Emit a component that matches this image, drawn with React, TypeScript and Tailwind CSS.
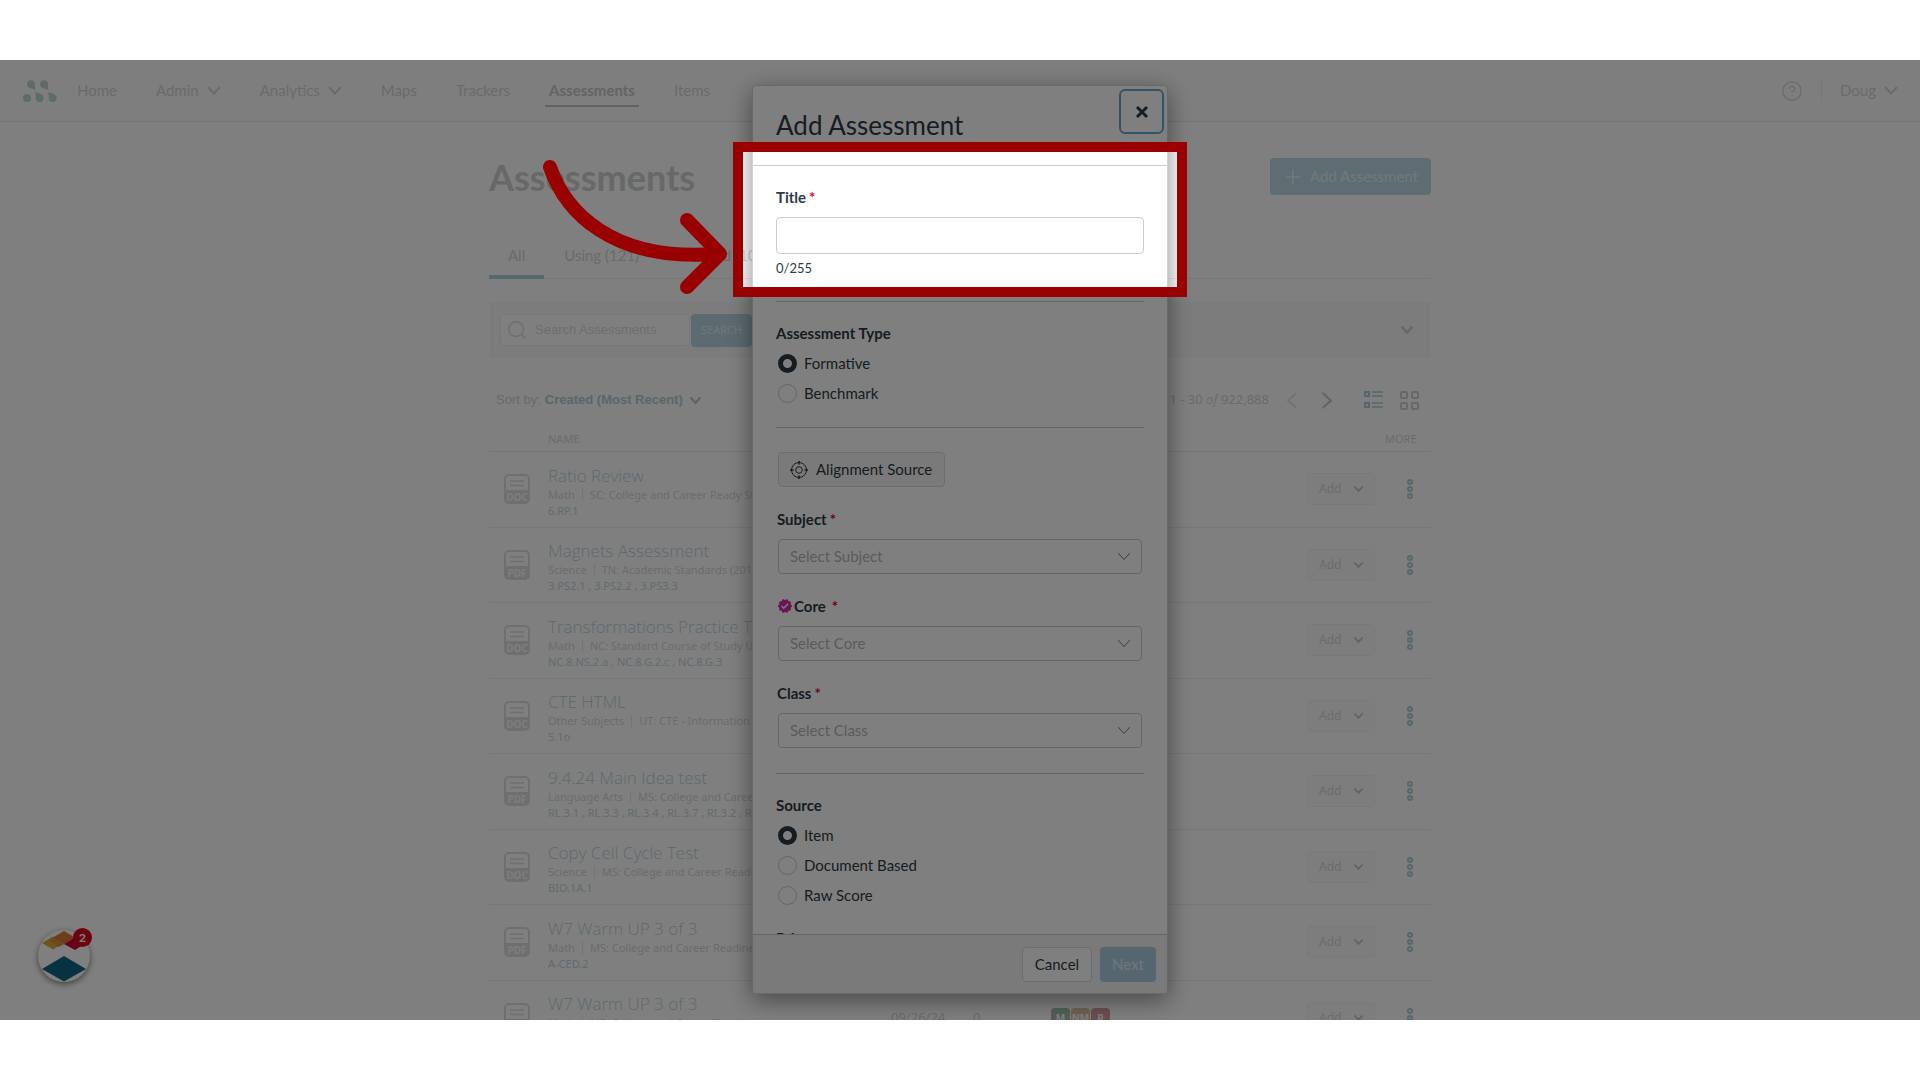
import type { ReactNode } from "react";
import { CircleQuestionMark, Plus, Search } from "lucide-react";
import { MdVerified } from "react-icons/md";
import { clsx } from "clsx";

type Assessment = {
  title: string;
  kind: "DOC" | "PDF";
  subject: string;
  framework: string;
  standards: string;
  created?: string;
  count?: number;
};

const assessments: Assessment[] = [
  { title: "Ratio Review", kind: "DOC", subject: "Math", framework: "SC: College and Career Ready Standards", standards: "6.RP.1" },
  { title: "Magnets Assessment", kind: "PDF", subject: "Science", framework: "TN: Academic Standards (2018)", standards: "3.PS2.1 , 3.PS2.2 , 3.PS3.3" },
  { title: "Transformations Practice Test", kind: "DOC", subject: "Math", framework: "NC: Standard Course of Study Updated", standards: "NC.8.NS.2.a , NC.8.G.2.c , NC.8.G.3" },
  { title: "CTE HTML", kind: "DOC", subject: "Other Subjects", framework: "UT: CTE - Information Technology", standards: "5.1o" },
  { title: "9.4.24 Main Idea test", kind: "PDF", subject: "Language Arts", framework: "MS: College and Career Readiness", standards: "RL.3.1 , RL.3.3 , RL.3.4 , RL.3.7 , RI.3.2 , RI.3.3" },
  { title: "Copy Cell Cycle Test", kind: "DOC", subject: "Science", framework: "MS: College and Career Readiness", standards: "BIO.1A.1" },
  { title: "W7 Warm UP 3 of 3", kind: "PDF", subject: "Math", framework: "MS: College and Career Readiness", standards: "A-CED.2" },
  { title: "W7 Warm UP 3 of 3", kind: "PDF", subject: "Math", framework: "MS: College and Career Readiness", standards: "A-CED.2", created: "09/26/24", count: 0 },
];

const navItems = [
  { label: "Home" },
  { label: "Admin", menu: true },
  { label: "Analytics", menu: true },
  { label: "Maps" },
  { label: "Trackers" },
  { label: "Assessments", active: true },
  { label: "Items" },
];

function Chevron({ className }: { className?: string }) {
  return (
    <svg
      viewBox="0 0 14 9"
      className={clsx("shrink-0 fill-none stroke-current", className)}
      strokeLinecap="round"
      strokeLinejoin="round"
    >
      <path d="M1.500 1.500L7 7.500l5.500-6" />
    </svg>
  );
}

function Logo() {
  return (
    <svg viewBox="0 0 34 22" className="h-[22px] w-[34px] fill-[#badacb]">
      <path d="M8 .3a4 4 0 0 1 4 3.600c.2 2 0 4 .4 6.100C10 8.700 4 8.500 4 4.300A4 4 0 0 1 8 .3z" />
      <path d="M21 .3a4 4 0 0 1 4 3.600c.2 2 0 4 .4 6.100-2.400-1.300-8.400-1.500-8.400-5.700A4 4 0 0 1 21 .3z" />
      <circle cx="4" cy="18" r="4" />
      <path d="M16.700 22a4 4 0 0 1-4-3.700c-.2-2 0-4-.4-6.300 2.400 1.300 8.400 1.700 8.400 6a4 4 0 0 1-4 4z" />
      <path d="M29.700 22a4 4 0 0 1-4-3.700c-.2-2 0-4-.4-6.300 2.400 1.300 8.400 1.700 8.400 6a4 4 0 0 1-4 4z" />
    </svg>
  );
}

function TopNav() {
  return (
    <header className="flex h-[62px] items-center border-b border-[#ececec] bg-[#fdfdfd] pr-[22px] pl-[23px] text-[15px] text-[#d3d6d7]">
      <Logo />
      <nav className="ml-5 flex items-center gap-[39px]">
        {navItems.map((item) => (
          <a
            key={item.label}
            href="#"
            className={
              item.active
                ? "relative -mx-1 px-1 font-bold text-[#c4c8ca] after:absolute after:inset-x-0 after:-bottom-[5px] after:h-[2px] after:bg-[#c0c3c4]"
                : "flex items-center gap-2"
            }
          >
            {item.label}
            {item.menu && <Chevron className="h-[9px] w-[14px] stroke-2" />}
          </a>
        ))}
      </nav>
      <div className="ml-auto flex items-center">
        <button aria-label="Help">
          <CircleQuestionMark className="size-[22px]" strokeWidth={1.5} />
        </button>
        <span className="mx-[18px] h-[22px] w-px bg-[#efefef]" />
        <button className="flex items-center gap-2">
          Doug
          <Chevron className="h-[9px] w-[14px] stroke-2" />
        </button>
      </div>
    </header>
  );
}

function FileIcon({ kind }: { kind: string }) {
  return (
    <svg viewBox="0 0 26 30" className="ml-[15px] h-[30px] w-[26px]">
      <rect x="1" y="1" width="24" height="28" rx="4" fill="none" stroke="#dedfe1" strokeWidth="2" />
      <path d="M6 7h14M6 11.500h14" stroke="#dedfe1" strokeWidth="1.500" />
      <path d="M1 16h24v9a4 4 0 0 1-4 4H5a4 4 0 0 1-4-4z" fill="#dedfe1" />
      <text
        x="13"
        y="27"
        textAnchor="middle"
        fontSize="10"
        fontWeight="700"
        fill="#fbfbfb"
        className="font-['Liberation_Sans_Narrow','Open_Sans',sans-serif]"
      >
        {kind}
      </text>
    </svg>
  );
}

function AssessmentTable() {
  return (
    <table className="w-full table-fixed text-left font-['Noto_Sans',sans-serif] text-[11px] text-[#d6d8d9]">
      <colgroup>
        <col className="w-[59px]" />
        <col />
        <col className="w-[82px]" />
        <col className="w-[78px]" />
        <col className="w-[256px]" />
        <col className="w-[78px]" />
        <col className="w-[46px]" />
      </colgroup>
      <thead>
        <tr className="h-[26px] border-b border-[#ebebeb] align-middle">
          <td />
          <th className="pt-[2px] font-normal">NAME</th>
          <td colSpan={4} />
          <th className="pt-[2px] font-normal">MORE</th>
        </tr>
      </thead>
      <tbody>
        {assessments.map((row, i) => (
          <tr key={i} className="h-[75px] border-b border-[#efefef] odd:h-[76px]">
            <td>
              <FileIcon kind={row.kind} />
            </td>
            <td className="overflow-hidden pt-1 whitespace-nowrap">
              <a href="#" className="block font-['Open_Sans',sans-serif] text-[17px] leading-[23px] font-light text-[#b9d3e0]">
                {row.title}
              </a>
              <div className="flex h-4 items-center leading-4">
                {row.subject}
                <span className="mx-[7px] h-3 w-px bg-[#e8e8e8]" />
                {row.framework}
              </div>
              <div className="leading-4 text-[#c2d7e1]">{row.standards}</div>
            </td>
            <td className="text-[13px]">{row.created}</td>
            <td className="text-[13px]">{row.count}</td>
            <td>
              {row.created && (
                <div className="flex gap-px text-center text-[10px] leading-5 font-bold text-white">
                  <span className="w-[19px] rounded-sm bg-[#a3c4ae]">M</span>
                  <span className="w-[19px] rounded-sm bg-[#dcc5a2]">NM</span>
                  <span className="w-[19px] rounded-sm bg-[#dc9ca5]">R</span>
                </div>
              )}
            </td>
            <td>
              <button className="flex h-8 w-[68px] items-center justify-between rounded-sm border border-[#f3f3f3] bg-[#fafafa] px-[11px] text-xs">
                Add
                <Chevron className="h-[6px] w-[9px] stroke-3 text-[#c6c9ca]" />
              </button>
            </td>
            <td>
              <button aria-label="More" className="ml-[22px] flex flex-col items-center gap-px">
                <span className="size-[6px] rounded-full border-2 border-[#b0cddb]" />
                <span className="size-[6px] rounded-full border-2 border-[#b0cddb]" />
                <span className="size-[6px] rounded-full border-2 border-[#b0cddb]" />
              </button>
            </td>
          </tr>
        ))}
      </tbody>
    </table>
  );
}

function AssessmentsPage() {
  return (
    <main className="mx-auto max-w-[942px] pt-9">
      <div className="flex h-[37px] items-center justify-between">
        <h1 className="text-4xl font-bold text-[#cdd0d2]">Assessments</h1>
        <button className="flex h-full items-center gap-[5px] rounded-sm bg-[#bddae6] pr-[13px] pl-[11px] text-[15px] text-[#e7f0f4]">
          <Plus className="size-6" strokeWidth={1.5} />
          Add Assessment
        </button>
      </div>

      <div className="mt-[39px] flex h-[45px] border-b border-[#efefef] text-[15px] text-[#d3d6d7]">
        <button className="h-[45px] border-b-4 border-[#afd0de] px-[19px] pt-[2px]">All</button>
        <button className="px-5 pb-[2px]">Using (121)</button>
        <button className="px-5 pb-[2px]">Created (10)</button>
      </div>

      <div className="mt-[23px] flex h-14 items-center bg-[#f9f9f9] pr-[18px] pl-[11px]">
        <label className="flex h-8 w-[190px] items-center gap-[7px] rounded-sm border border-[#f0f0f0] bg-white px-[5px]">
          <Search className="size-[22px] shrink-0 text-[#dadada]" strokeWidth={1.5} />
          <input
            aria-label="Search Assessments"
            placeholder="Search Assessments"
            className="w-full font-['Liberation_Sans',sans-serif] text-[13px] outline-none placeholder:text-[#dcdddd]"
          />
        </label>
        <button className="ml-px h-[33px] rounded-sm bg-[#b9d5e2] px-[10px] font-['Open_Sans',sans-serif] text-[11px] text-[#e4eef3]">
          SEARCH
        </button>
        <button aria-label="Expand filters" className="ml-auto text-[#cfd1d2]">
          <Chevron className="h-2 w-3 stroke-3" />
        </button>
      </div>

      <div className="mt-[22px] mb-[5px] flex h-10 items-center pr-3 pl-[7px] font-['Liberation_Sans',sans-serif] text-[13px] text-[#d3d4d5]">
        <span>Sort by:</span>
        <button className="ml-1 flex items-center gap-[7px] font-bold text-[#b7ccd7]">
          Created (Most Recent)
          <Chevron className="h-[7px] w-[11px] stroke-3" />
        </button>
        <span className="ml-auto font-['Noto_Sans',sans-serif]">
          1 - 30 <i className="text-[#dcdddd]">of</i> 922,888
        </span>
        <button aria-label="Previous page" className="ml-4 text-[#e4e4e4]">
          <Chevron className="h-[9px] w-[14px] rotate-90 scale-130 stroke-[1.500px]" />
        </button>
        <button aria-label="Next page" className="ml-[21px] text-[#c0c3c5]">
          <Chevron className="h-[9px] w-[14px] -rotate-90 scale-130 stroke-[1.500px]" />
        </button>
        <button aria-label="List view" className="ml-[30px]">
          <svg viewBox="0 0 19 18" className="h-[18px] w-[19px] fill-none stroke-[#aecbda] stroke-2">
            <rect x="1" y="1" width="4" height="4" />
            <rect x="1" y="12" width="4" height="4" />
            <path d="M8 1h11M8 5h11M8 12h11M8 16h11" strokeWidth="1.500" />
          </svg>
        </button>
        <button aria-label="Grid view" className="ml-[17px]">
          <svg viewBox="0 0 19 19" className="size-[19px] fill-none stroke-[#cfd1d2] stroke-2">
            <rect x="1" y="1" width="6" height="6" rx="1" />
            <rect x="12" y="1" width="6" height="6" rx="1" />
            <rect x="1" y="12" width="6" height="6" rx="1" />
            <rect x="12" y="12" width="6" height="6" rx="1" />
          </svg>
        </button>
      </div>

      <AssessmentTable />
    </main>
  );
}

function Required() {
  return <span className="text-[#e0061f]">*</span>;
}

function RadioGroup({ name, legend, options }: { name: string; legend: string; options: string[] }) {
  return (
    <fieldset className="border-t border-[#c7cdd1] pt-4">
      <legend className="float-left w-full leading-[30px] font-bold">{legend}</legend>
      {options.map((option, i) => (
        <label key={option} className="clear-both ml-[2px] flex h-[30px] items-center gap-[7px]">
          <input
            type="radio"
            name={name}
            defaultChecked={i === 0}
            className="size-[19px] appearance-none rounded-full border border-[#c7cdd1] checked:border-[5px] checked:border-[#2d3b45]"
          />
          {option}
        </label>
      ))}
    </fieldset>
  );
}

function SelectField({ id, label, icon }: { id: string; label: string; icon?: ReactNode }) {
  return (
    <div className="mt-5">
      <label
        htmlFor={id}
        className={clsx("ml-px flex h-6 items-center font-bold", icon ? "gap-[6px]" : "gap-[3px]")}
      >
        <span className="flex items-center gap-px">
          {icon}
          {label}
        </span>
        <Required />
      </label>
      <div className="relative mx-[2px] mt-2">
        <select
          id={id}
          className="h-[35px] w-full appearance-none rounded-sm border border-[#c7cdd1] bg-white px-[11px] text-[#b3b7ba]"
        >
          <option>Select {label}</option>
        </select>
        <Chevron className="pointer-events-none absolute top-[13px] right-[11px] h-[9px] w-[14px] text-[#6b7780]" />
      </div>
    </div>
  );
}

function AddAssessmentDialog() {
  return (
    <div className="absolute inset-0 flex justify-center pt-[25px] pb-[26px]">
      <div
        role="dialog"
        aria-labelledby="dialog-title"
        className="flex w-[416px] flex-col overflow-hidden rounded-sm border border-[#d0d3d5] bg-white text-[15px] text-[#2d3b45] shadow-[0_6px_24px_rgba(0,0,0,0.45)]"
      >
        <div className="flex h-20 shrink-0 items-start justify-between border-b border-[#c7cdd1] pt-[3px] pr-[3px] pl-[23px]">
          <h2 id="dialog-title" className="mt-[18px] text-[26px] leading-9">
            Add Assessment
          </h2>
          <button
            aria-label="Close"
            className="flex size-[45px] items-center justify-center rounded-md border-2 border-[#66a9c9]"
          >
            <svg viewBox="0 0 14 14" className="size-[14px] stroke-[#2d3b45] stroke-3">
              <path d="M2 2l10 10M12 2L2 12" />
            </svg>
          </button>
        </div>

        <form className="min-h-0 flex-1 overflow-hidden px-[23px] pt-[19px]">
          <label htmlFor="title" className="flex h-6 items-center gap-[3px] font-bold">
            Title <Required />
          </label>
          <input id="title" className="mt-2 block h-[37px] w-full rounded-sm border border-[#c7cdd1] px-3" />
          <p className="mt-1 mb-[23px] text-[13px] leading-5">0/255</p>

          <RadioGroup name="type" legend="Assessment Type" options={["Formative", "Benchmark"]} />

          <div className="mt-[19px] border-t border-[#c7cdd1] pt-6 pb-[25px]">
            <button
              type="button"
              className="ml-[2px] flex h-[35px] items-center gap-2 rounded-sm border border-[#d5d9dc] bg-[#f5f5f5] pr-3 pl-[11px]"
            >
              <svg viewBox="0 0 18 18" className="size-[18px] fill-none stroke-[#2d3b45]">
                <circle cx="9" cy="9" r="7.500" />
                <circle cx="9" cy="9" r="3.300" />
                <path d="M9 0v3.500M9 14.500v3.500M0 9h3.500M14.500 9h3.500" strokeWidth="1.500" />
              </svg>
              Alignment Source
            </button>
            <SelectField id="subject" label="Subject" />
            <SelectField id="core" label="Core" icon={<MdVerified className="size-4 text-[#d42aa8]" />} />
            <SelectField id="class" label="Class" />
          </div>

          <RadioGroup name="source" legend="Source" options={["Item", "Document Based", "Raw Score"]} />

          <h3 className="mt-[13px] leading-[30px] font-bold">Privacy</h3>
        </form>

        <div className="flex h-[59px] shrink-0 items-center justify-end gap-2 border-t border-[#c7cdd1] bg-[#f5f5f5] pr-[11px]">
          <button className="h-[35px] rounded-sm border border-[#d5d9dc] bg-white px-3">Cancel</button>
          <button className="h-[35px] rounded-sm bg-[#aacde2] px-3 text-[#e4eef5]">Next</button>
        </div>
      </div>
    </div>
  );
}

function HelpLauncher() {
  return (
    <button
      aria-label="Resource center"
      className="absolute bottom-[38px] left-[38px] size-[52px] rounded-full bg-white shadow-[0_2px_6px_rgba(0,0,0,0.5)]"
    >
      <svg viewBox="0 0 52 52" className="size-full">
        <path d="M4 13l11-6.500L26 13l-11 6.500z" fill="#d8ac3f" />
        <path d="M15 7.500L26 1l11 6.500L26 14z" fill="#dd7b36" />
        <path d="M15 7.500L26 14l-5 3-10.500-6.500z" fill="#d69338" />
        <path d="M26 14l11-6.500L48 13l-11 7z" fill="#d00038" />
        <path d="M26 26l22 13-22 12.500L4 39z" fill="#0e6580" />
      </svg>
      <span className="absolute -top-[2px] -right-[2px] size-[19px] rounded-full bg-[#dd0620] text-xs leading-[19px] font-bold text-white">
        2
      </span>
    </button>
  );
}

// Dims everything except the framed field and points an arrow at it
function Spotlight() {
  return (
    <div className="pointer-events-none absolute inset-0 flex items-start justify-center pt-[82px]">
      <div className="relative h-[155px] w-[454px] border-10 border-[#990000] shadow-[0_0_0_9999px_rgba(0,0,0,0.5)]">
        <svg
          viewBox="0 0 190 148"
          className="absolute -top-[2px] right-full mr-3 h-[148px] w-[190px] fill-none stroke-[#990000] stroke-[14px]"
          strokeLinecap="round"
          strokeLinejoin="round"
        >
          <path d="M9 17C24 61 70 112 176 104" />
          <path d="M146 70l33 34-33 33" />
        </svg>
      </div>
    </div>
  );
}

export default function App() {
  return (
    <div className="flex min-h-screen items-center bg-white font-['Lato',sans-serif]">
      <div className="relative aspect-[2/1] w-full overflow-hidden bg-white">
        <TopNav />
        <AssessmentsPage />
        <AddAssessmentDialog />
        <HelpLauncher />
        <Spotlight />
      </div>
    </div>
  );
}
